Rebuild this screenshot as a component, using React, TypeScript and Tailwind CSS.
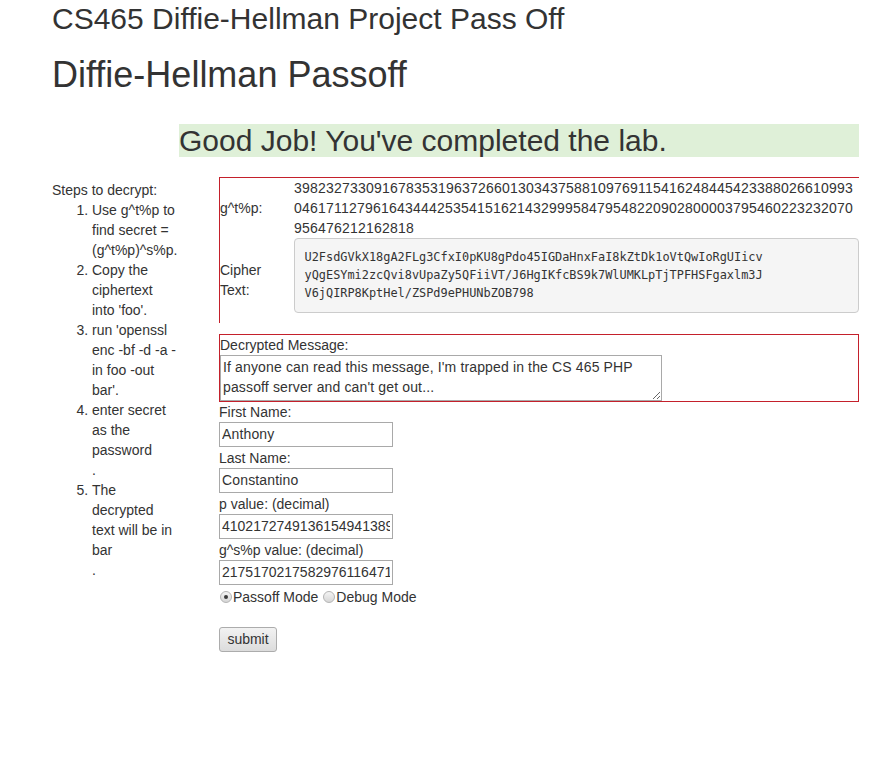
import React from "react";

const RED = "border-[#c4202b]";

function Radio({ checked }: { checked?: boolean }) {
  return (
    <span className="relative inline-block w-[12px] h-[12px] rounded-full border border-[#b4b4b4] bg-gradient-to-b from-[#f4f4f4] to-[#d6d6d6]">
      {checked && (
        <span className="absolute left-[3px] top-[3px] w-[4px] h-[4px] rounded-full bg-[#3a3a3a]" />
      )}
    </span>
  );
}

const inputCls =
  "block w-[174px] h-[25px] mb-[1px] border border-[#a9a9a9] px-[2px] text-[14px] text-[#333333] outline-none font-['Liberation_Sans',Arial,sans-serif]";

export default function App() {
  return (
    <div className="min-h-[775px] bg-white text-[#333333] font-['Liberation_Sans',Arial,sans-serif] text-[14px] leading-[20px]">
      <div className="pl-[52px] w-[859px]">
        <h2 className="pt-[2px] text-[30px] leading-[33px] font-normal">
          CS465 Diffie-Hellman Project Pass Off
        </h2>
        <h1 className="mt-[20px] text-[36px] leading-[39.6px] font-normal">
          Diffie-Hellman Passoff
        </h1>
        <div className="grid grid-cols-[127px_680px] mt-[29px]">
          <div />
          <h2 className="bg-[#dff0d8] text-[30px] leading-[33px] font-normal mb-[20px]">
            Good Job! You've completed the lab.
          </h2>
          <div className="pt-[3px]">
            <div>Steps to decrypt:</div>
            <ol className="list-decimal pl-[40px]">
              <li>Use g^t%p to find secret = (g^t%p)^s%p.</li>
              <li>Copy the ciphertext into 'foo'.</li>
              <li>
                run 'openssl enc -bf -d -a -<wbr />in foo -out bar'.
              </li>
              <li>
                enter secret as the password
                <br />.
              </li>
              <li>
                The decrypted text will be in bar
                <br />.
              </li>
            </ol>
          </div>
          <div className="pl-[40px]">
            <div className={`border-t border-l ${RED} grid grid-cols-[74px_1fr]`}>
              <div className="self-center">g^t%p:</div>
              <div className="tracking-[0.216px]">
                <div>3982327330916783531963726601303437588109769115416248445423388026610993</div>
                <div>0461711279616434442535415162143299958479548220902800003795460223232070</div>
                <div>956476212162818</div>
              </div>
              <div className="self-center">Cipher Text:</div>
              <div>
                <pre className="mb-[10px] bg-[#f5f5f5] border border-[#cccccc] rounded-[4px] p-[9.5px] font-['DejaVu_Sans_Mono',monospace] text-[11.9px] leading-[18px] text-[#333333] whitespace-pre">
{`U2FsdGVkX18gA2FLg3CfxI0pKU8gPdo45IGDaHnxFaI8kZtDk1oVtQwIoRgUIicv
yQgESYmi2zcQvi8vUpaZy5QFiiVT/J6HgIKfcBS9k7WlUMKLpTjTPFHSFgaxlm3J
V6jQIRP8KptHel/ZSPd9ePHUNbZOB798`}
                </pre>
              </div>
            </div>

            <div className={`mt-[11px] border ${RED}`}>
              <div>Decrypted Message:</div>
              <textarea
                readOnly
                className="block w-[442px] h-[46px] border border-[#a9a9a9] px-[2px] py-[1px] text-[14px] leading-[20px] tracking-[0.14px] text-[#333333] font-['Liberation_Sans',Arial,sans-serif] resize-y outline-none"
                value="If anyone can read this message, I'm trapped in the CS 465 PHP passoff server and can't get out..."
              />
            </div>

            <div>First Name:</div>
            <input readOnly className={`${inputCls} tracking-[0.15px]`} value="Anthony" />
            <div>Last Name:</div>
            <input readOnly className={`${inputCls} tracking-[0.15px]`} value="Constantino" />
            <div>p value: (decimal)</div>
            <input readOnly className={inputCls} value="4102172749136154941389" />
            <div>g^s%p value: (decimal)</div>
            <input readOnly className={inputCls} value="2175170217582976116471" />
            <div className="mt-[2px] h-[20px] flex items-center">
              <span className="ml-[1px] mr-[1px] flex"><Radio checked /></span>
              <span>Passoff Mode</span>
              <span className="ml-[5px] mr-[1px] flex"><Radio /></span>
              <span>Debug Mode</span>
            </div>
            <button
              type="button"
              className="block mt-[20px] w-[58px] h-[25px] border border-[#acacac] rounded-[3px] bg-gradient-to-b from-[#f2f2f2] to-[#dcdcdc] text-[14px] text-[#333333] leading-[20px]"
            >
              submit
            </button>
          </div>
        </div>
      </div>
    </div>
  );
}
